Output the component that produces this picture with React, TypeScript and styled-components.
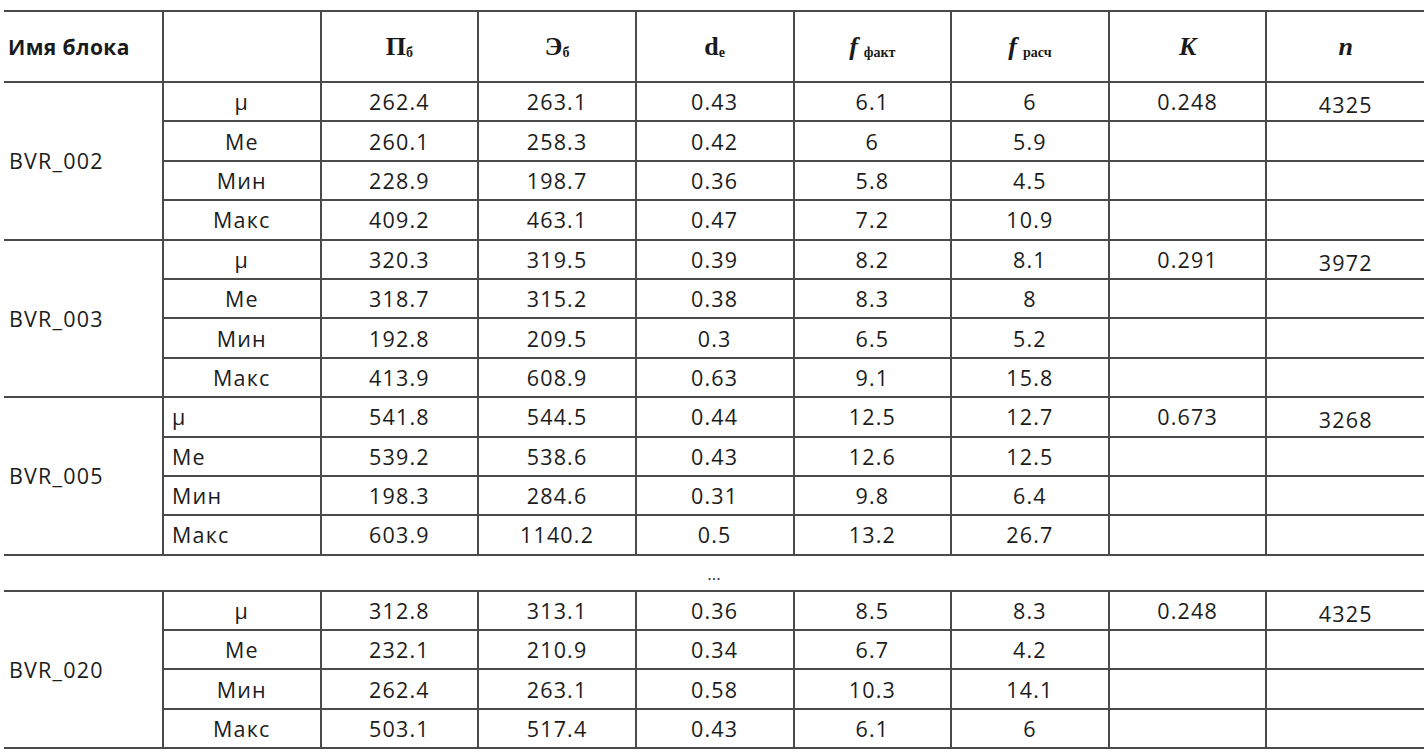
import styled, { createGlobalStyle } from "styled-components";

type Group = {
  name: string;
  statAlign?: "left" | "center";
  k: string;
  n: string;
  rows: string[][];
};

const groups: Group[] = [
  {
    name: "BVR_002",
    k: "0.248",
    n: "4325",
    rows: [
      ["μ", "262.4", "263.1", "0.43", "6.1", "6"],
      ["Me", "260.1", "258.3", "0.42", "6", "5.9"],
      ["Мин", "228.9", "198.7", "0.36", "5.8", "4.5"],
      ["Макс", "409.2", "463.1", "0.47", "7.2", "10.9"]
    ]
  },
  {
    name: "BVR_003",
    k: "0.291",
    n: "3972",
    rows: [
      ["μ", "320.3", "319.5", "0.39", "8.2", "8.1"],
      ["Me", "318.7", "315.2", "0.38", "8.3", "8"],
      ["Мин", "192.8", "209.5", "0.3", "6.5", "5.2"],
      ["Макс", "413.9", "608.9", "0.63", "9.1", "15.8"]
    ]
  },
  {
    name: "BVR_005",
    statAlign: "left",
    k: "0.673",
    n: "3268",
    rows: [
      ["μ", "541.8", "544.5", "0.44", "12.5", "12.7"],
      ["Me", "539.2", "538.6", "0.43", "12.6", "12.5"],
      ["Мин", "198.3", "284.6", "0.31", "9.8", "6.4"],
      ["Макс", "603.9", "1140.2", "0.5", "13.2", "26.7"]
    ]
  }
];

const lastGroup: Group = {
  name: "BVR_020",
  k: "0.248",
  n: "4325",
  rows: [
    ["μ", "312.8", "313.1", "0.36", "8.5", "8.3"],
    ["Me", "232.1", "210.9", "0.34", "6.7", "4.2"],
    ["Мин", "262.4", "263.1", "0.58", "10.3", "14.1"],
    ["Макс", "503.1", "517.4", "0.43", "6.1", "6"]
  ]
};

const GlobalStyle = createGlobalStyle`
  html, body {
    margin: 0;
    padding: 0;
    background: #fff;
  }
  body {
    font-family: "Open Sans", "Liberation Sans", sans-serif;
    color: #1c1c1c;
  }
`;

const Page = styled.div`
  padding: 10px 4px 0 4px;
`;

const Table = styled.table`
  width: 1420px;
  border-collapse: collapse;
  table-layout: fixed;
`;

const line = "2px solid #4a4a4a";

const HeadCell = styled.th<{ $left?: boolean }>`
  box-sizing: border-box;
  height: 71px;
  padding: 0 0 0 ${(p) => (p.$left ? "4px" : "0")};
  border-top: ${line};
  border-bottom: ${line};
  border-left: ${line};
  text-align: ${(p) => (p.$left ? "left" : "center")};
  vertical-align: middle;
  font-weight: 700;
  &:first-child {
    border-left: none;
  }
`;

const BlockTitle = styled.span`
  font-family: "Open Sans", "Liberation Sans", sans-serif;
  font-size: 21px;
  font-weight: 700;
  letter-spacing: 0.4px;
  color: #1a1a1a;
`;

const MathLabel = styled.span<{ $italic?: boolean }>`
  font-family: "Liberation Serif", "Times New Roman", serif;
  font-size: 26px;
  font-weight: 700;
  font-style: ${(p) => (p.$italic ? "italic" : "normal")};
  color: #1a1a1a;
`;

const Sub = styled.sub<{ $gap?: boolean }>`
  font-family: "Liberation Serif", "Times New Roman", serif;
  font-size: 14px;
  font-style: normal;
  font-weight: 700;
  vertical-align: -2px;
  margin-left: ${(p) => (p.$gap ? "6px" : "0")};
`;

const Cell = styled.td<{ $align?: "left" | "center"; $lower?: boolean }>`
  box-sizing: border-box;
  height: 39.4px;
  padding: ${(p) => (p.$lower ? "6px" : "0")} 0 0
    ${(p) => (p.$align === "left" ? "8px" : "0")};
  border-top: ${line};
  border-bottom: ${line};
  border-left: ${line};
  text-align: ${(p) => p.$align ?? "center"};
  vertical-align: middle;
  font-size: 21.5px;
  letter-spacing: 1.2px;
  color: #1c1c1c;
  white-space: nowrap;
`;

const NameCell = styled.td`
  padding: 0 0 0 5px;
  border-top: ${line};
  border-bottom: ${line};
  text-align: left;
  vertical-align: middle;
  font-size: 21.5px;
  letter-spacing: 1.2px;
  color: #1c1c1c;
`;

const GapCell = styled.td`
  box-sizing: border-box;
  height: 36px;
  padding: 2px 0 0;
  border-top: ${line};
  border-bottom: ${line};
  text-align: center;
  font-size: 17px;
  color: #333;
`;

function GroupRows({ group }: { group: Group }) {
  return (
    <>
      {group.rows.map((row, i) => (
        <tr key={i}>
          {i === 0 && <NameCell rowSpan={4}>{group.name}</NameCell>}
          {row.map((value, j) => (
            <Cell key={j} $align={j === 0 ? group.statAlign : "center"}>
              {value}
            </Cell>
          ))}
          <Cell>{i === 0 ? group.k : ""}</Cell>
          <Cell $lower={i === 0}>{i === 0 ? group.n : ""}</Cell>
        </tr>
      ))}
    </>
  );
}

export default function App() {
  return (
    <>
      <GlobalStyle />
      <Page>
        <Table>
          <colgroup>
            <col style={{ width: 159 }} />
            <col />
            <col />
            <col />
            <col />
            <col />
            <col />
            <col />
            <col />
          </colgroup>
          <thead>
            <tr>
              <HeadCell $left>
                <BlockTitle>Имя блока</BlockTitle>
              </HeadCell>
              <HeadCell />
              <HeadCell>
                <MathLabel>
                  П<Sub>б</Sub>
                </MathLabel>
              </HeadCell>
              <HeadCell>
                <MathLabel>
                  Э<Sub>б</Sub>
                </MathLabel>
              </HeadCell>
              <HeadCell>
                <MathLabel>
                  d<Sub>е</Sub>
                </MathLabel>
              </HeadCell>
              <HeadCell>
                <MathLabel $italic>
                  f<Sub $gap>факт</Sub>
                </MathLabel>
              </HeadCell>
              <HeadCell>
                <MathLabel $italic>
                  f<Sub $gap>расч</Sub>
                </MathLabel>
              </HeadCell>
              <HeadCell>
                <MathLabel $italic>K</MathLabel>
              </HeadCell>
              <HeadCell>
                <MathLabel $italic>n</MathLabel>
              </HeadCell>
            </tr>
          </thead>
          <tbody>
            {groups.map((g) => (
              <GroupRows key={g.name} group={g} />
            ))}
            <tr>
              <GapCell colSpan={9}>...</GapCell>
            </tr>
            <GroupRows group={lastGroup} />
          </tbody>
        </Table>
      </Page>
    </>
  );
}
